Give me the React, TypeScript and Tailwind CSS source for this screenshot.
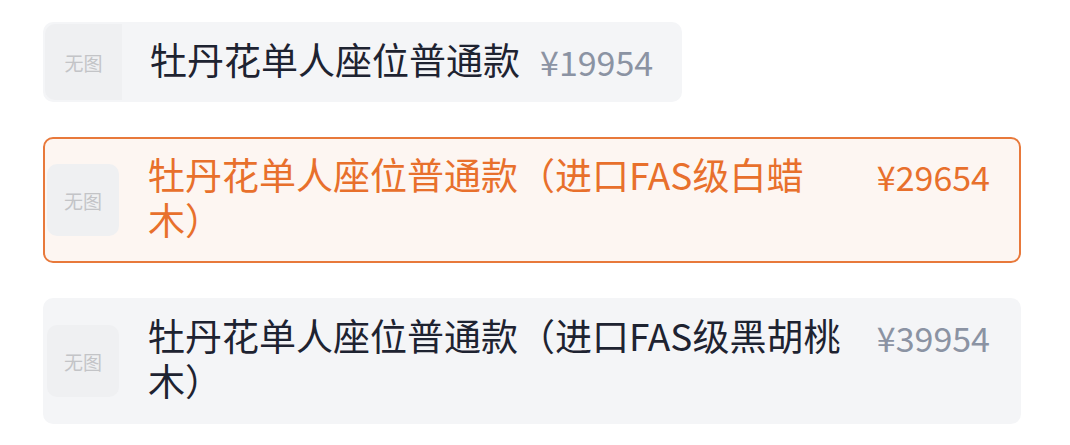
const options = [
  { id: 1, name: "牡丹花单人座位普通款", price: 19954 },
  { id: 2, name: "牡丹花单人座位普通款（进口FAS级白蜡木）", price: 29654 },
  { id: 3, name: "牡丹花单人座位普通款（进口FAS级黑胡桃木）", price: 39954 },
];

const selectedId = 2;

function Thumb({ fill }: { fill?: boolean }) {
  return (
    <div
      className={
        fill
          ? "flex w-[77px] flex-none items-center justify-center self-stretch rounded-l-[10px] bg-[#eff0f2]"
          : "ml-[2px] flex h-[72px] w-[72px] flex-none items-center justify-center rounded-[10px] bg-[#eff0f2]"
      }
    >
      <span className="text-[19px] leading-none text-[#c3c4c7]">无图</span>
    </div>
  );
}

export default function App() {
  return (
    <div className="flex min-h-screen flex-col items-start gap-[35px] bg-white pl-[43px] pt-[22px] font-['Noto_Sans_CJK_SC',sans-serif]">
      {options.map((item, i) => {
        const active = item.id === selectedId;
        return (
          <div
            key={item.id}
            className={
              active
                ? "flex w-fit max-w-[978px] items-center rounded-[10px] border-2 border-[#e8793b] bg-[#fdf6f2]"
                : "flex w-fit max-w-[978px] items-center rounded-[10px] border-2 border-transparent bg-[#f4f5f7]"
            }
          >
            <Thumb fill={i === 0} />
            <div
              className={
                i === 0
                  ? "ml-[28px] flex min-w-0 flex-1 items-start gap-[20px] pt-[13px] pb-[18px] pr-[27px]"
                  : "ml-[29px] flex min-w-0 flex-1 items-start gap-[22px] pt-[13px] pb-[19px] pr-[29px]"
              }
            >
              <div
                className={
                  active
                    ? "min-w-0 text-[37px] leading-[45px] text-[#e8702c]"
                    : "min-w-0 text-[37px] leading-[45px] text-[#1e2331]"
                }
              >
                {item.name}
              </div>
              <div
                className={
                  active
                    ? "relative top-[2px] flex-none text-[34px] leading-[45px] text-[#e8702c]"
                    : "relative top-[2px] flex-none text-[34px] leading-[45px] text-[#8b93a3]"
                }
              >
                ¥{item.price}
              </div>
            </div>
          </div>
        );
      })}
    </div>
  );
}
